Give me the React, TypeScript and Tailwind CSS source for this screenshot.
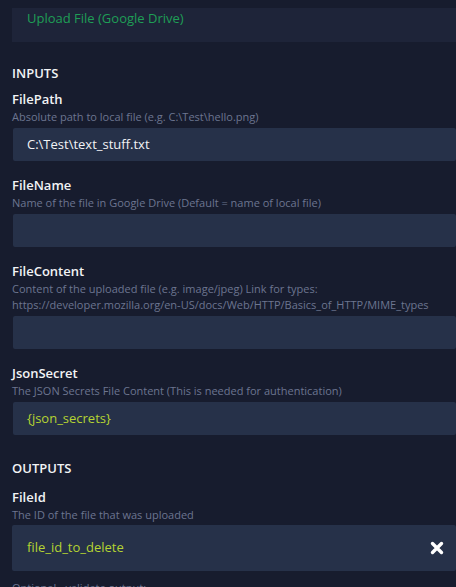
const inputs = [
  {
    name: "FilePath",
    desc: ["Absolute path to local file (e.g. C:\\Test\\hello.png)"],
    value: "C:\\Test\\text_stuff.txt",
    tone: "plain",
  },
  {
    name: "FileName",
    desc: ["Name of the file in Google Drive (Default = name of local file)"],
    value: "",
    tone: "plain",
  },
  {
    name: "FileContent",
    desc: [
      "Content of the uploaded file (e.g. image/jpeg) Link for types:",
      "https://developer.mozilla.org/en-US/docs/Web/HTTP/Basics_of_HTTP/MIME_types",
    ],
    value: "",
    tone: "plain",
  },
  {
    name: "JsonSecret",
    desc: ["The JSON Secrets File Content (This is needed for authentication)"],
    value: "{json_secrets}",
    tone: "var",
  },
];

function Field({ name, desc, value, tone }: { name: string; desc: string[]; value: string; tone: string }) {
  return (
    <div className="mt-[14px]">
      <p className="text-[13px] leading-[20px] font-semibold text-[#f2f3f5]">{name}</p>
      <div className="text-[11px] leading-[16px] text-[#6c7590]">
        {desc.map((d) => (
          <p key={d}>{d}</p>
        ))}
      </div>
      <div
        className={
          tone === "var"
            ? "mt-[3px] ml-px h-[33px] flex items-center pl-[14px] rounded-[2px] bg-[#263149] text-[13px] text-[#b5d432]"
            : "mt-[3px] ml-px h-[33px] flex items-center pl-[14px] rounded-[2px] bg-[#263149] text-[13px] text-[#f2f3f5]"
        }
      >
        {value}
      </div>
    </div>
  );
}

export default function App() {
  return (
    <div
      className="w-[456px] h-[587px] overflow-hidden bg-[#171c2e] pl-3 pt-2"
      style={{ fontFamily: '"Open Sans", "Noto Sans", sans-serif' }}
    >
      <div className="h-[34px] bg-[#1e2439] pl-[15px] text-[13px] leading-[20px] text-[#1f9e56]">
        Upload File (Google Drive)
      </div>

      <p className="mt-[21px] text-[13px] leading-[20px] font-semibold text-[#f2f3f5]">INPUTS</p>
      <div className="-mt-[8px]">
        {inputs.map((f) => (
          <Field key={f.name} {...f} />
        ))}
      </div>

      <p className="mt-[23px] text-[13px] leading-[20px] font-semibold text-[#f2f3f5]">OUTPUTS</p>
      <div className="mt-[9px]">
        <p className="text-[13px] leading-[20px] font-semibold text-[#f2f3f5]">FileId</p>
        <p className="text-[11px] leading-[16px] text-[#6c7590]">The ID of the file that was uploaded</p>
        <div className="mt-[2px] h-[46px] flex items-center justify-between pl-[15px] pr-[12px] rounded-[2px] bg-[#263149] text-[13px] text-[#b5d432]">
          <span>file_id_to_delete</span>
          <svg width="14" height="14" viewBox="0 0 14 14">
            <path d="M2.5 2.5 L11.5 11.5 M11.5 2.5 L2.5 11.5" stroke="#ffffff" strokeWidth="3.4" strokeLinecap="round" />
          </svg>
        </div>
        <p className="mt-[9px] text-[11px] leading-[16px] text-[#6c7590]">Optional - validate output:</p>
      </div>
    </div>
  );
}
